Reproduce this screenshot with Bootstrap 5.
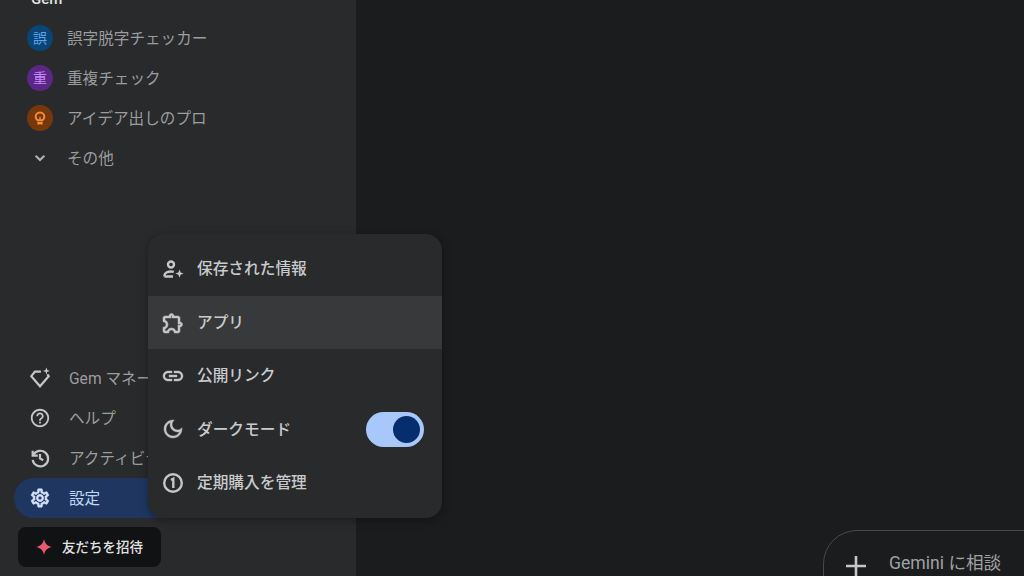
<!DOCTYPE html>
<html lang="ja">
  <head>
    <meta charset="UTF-8" />
    <meta name="viewport" content="width=device-width, initial-scale=1.0" />
    <title>Gemini</title>
    <link href="https://cdn.jsdelivr.net/npm/bootstrap@5.3.1/dist/css/bootstrap.min.css" rel="stylesheet" />
    <style>
      html, body { height: 100%; overflow: hidden; }
      body { background: #1b1c1d; font-family: Roboto, "Noto Sans CJK JP", sans-serif; }
      .app-shell { height: 576px; }
      .side-panel { width: 356px; height: 586px; margin-top: -10px; background: #282a2c; padding-bottom: 9px; flex-shrink: 0; }
      .gem-title { height: 28px; padding-left: 31px; font-size: 15px; line-height: 18px; font-weight: 500; color: #e3e3e3; }
      .side-row { height: 40px; color: #9b9d9f; font-size: 15.6px; white-space: nowrap; }
      .gem-label { padding-top: 3px; }
      .gem-row { padding-left: 27px; gap: 14px; }
      .gem-dot { width: 26px; height: 26px; border-radius: 50%; font-size: 14px; flex-shrink: 0; }
      .dot-blue { background: #0b4576; color: #5ea6ee; }
      .dot-purple { background: #5b2686; color: #c58af9; }
      .dot-orange { background: #76380a; color: #f28b3c; }
      .more-mark { width: 26px; flex-shrink: 0; }
      .tool-row { margin-left: 14px; padding-left: 15px; gap: 18px; width: 326px; }
      .tool-row svg { flex-shrink: 0; }
      .tool-on { background: #1f3760; color: #c2d7f8; border-radius: 20px; }
      .invite-btn { margin: 9px 0 0 18px; width: 143px; height: 40px; background: #111213; color: #e3e3e3; border-radius: 8px; font-size: 13.5px; font-weight: 500; padding-left: 17px; gap: 9px; }
      .main-pane { min-width: 0; }
      .ask-box { margin: auto -60px -54px 467px; height: 100px; border: 1px solid #47494b; border-radius: 34px; padding: 19px 0 0 20px; gap: 21px; color: #9fa1a3; font-size: 17.6px; }
      .settings-menu { position: absolute; left: 148px; top: 234px; width: 294px; height: 284px; background: #282a2c; border-radius: 16px; padding-top: 8.500px; box-shadow: 0 2px 8px rgba(0, 0, 0, .35); overflow: hidden; }
      .settings-row { height: 53.4px; padding-left: 13px; padding-right: 18px; gap: 12px; color: #c9cbcd; font-size: 15.7px; font-weight: 500; }
      .settings-row svg { flex-shrink: 0; }
      .row-hover { background: #38393b; }
      .theme-switch { width: 58px; height: 35px; border-radius: 18px; background: #a8c7fa; padding-right: 4px; }
      .theme-knob { width: 27px; height: 27px; border-radius: 50%; background: #062e6f; }
    </style>
  </head>
  <body>
    <div class="app-shell d-flex position-relative">
      <!-- Sidebar -->
      <aside class="side-panel d-flex flex-column">
        <div class="gem-title">Gem</div>
        <div class="side-row gem-row d-flex align-items-center">
          <span class="gem-dot dot-blue d-flex align-items-center justify-content-center">誤</span>
          <span class="gem-label">誤字脱字チェッカー</span>
        </div>
        <div class="side-row gem-row d-flex align-items-center">
          <span class="gem-dot dot-purple d-flex align-items-center justify-content-center">重</span>
          <span class="gem-label">重複チェック</span>
        </div>
        <div class="side-row gem-row d-flex align-items-center">
          <span class="gem-dot dot-orange d-flex align-items-center justify-content-center">
            <svg width="16" height="16" viewBox="0 0 24 24" fill="none" stroke="#f28b3c" stroke-width="3"><path d="M8.500 15.500c-1.900-1.200-3-3.100-3-5.200a6.500 6.500 0 0 1 13 0c0 2.100-1.100 4-3 5.200z" /><path d="M12 10v5" stroke-width="2" /><path d="M8 19.800h8" stroke-width="4" /></svg>
          </span>
          <span class="gem-label">アイデア出しのプロ</span>
        </div>
        <div class="side-row gem-row d-flex align-items-center">
          <span class="more-mark d-flex justify-content-center">
            <svg width="16" height="16" viewBox="0 0 24 24" fill="none" stroke="#b0b2b4" stroke-width="3.200"><path d="M5.500 8.500 12 15l6.500-6.500" /></svg>
          </span>
          <span class="gem-label">その他</span>
        </div>

        <div class="mt-auto">
          <div class="side-row tool-row d-flex align-items-center">
            <svg width="22" height="22" viewBox="0 0 24 24" fill="none" stroke="#c4c7c5" stroke-width="2.400"><path d="M13 5H6.500L2.500 10 12 21l9.500-11-1.500-2" /><path d="M19 .5l1 2.800 2.800 1-2.800 1-1 2.800-1-2.800-2.800-1 2.800-1z" fill="#c4c7c5" stroke="none" /></svg>
            <span class="gem-label">Gem マネージャー</span>
          </div>
          <div class="side-row tool-row d-flex align-items-center">
            <svg width="22" height="22" viewBox="0 0 24 24" fill="#c4c7c5"><path d="M11 18h2v-2h-2v2zm1-16C6.480 2 2 6.480 2 12s4.480 10 10 10 10-4.480 10-10S17.520 2 12 2zm0 18c-4.410 0-8-3.590-8-8s3.590-8 8-8 8 3.590 8 8-3.590 8-8 8zm0-14c-2.210 0-4 1.790-4 4h2c0-1.100.9-2 2-2s2 .9 2 2c0 2-3 1.750-3 5h2c0-2.250 3-2.500 3-5 0-2.210-1.790-4-4-4z" /></svg>
            <span class="gem-label">ヘルプ</span>
          </div>
          <div class="side-row tool-row d-flex align-items-center">
            <svg width="22" height="22" viewBox="0 0 24 24" fill="none" stroke="#c4c7c5" stroke-width="2.400"><path d="M4 4v5.500h5.500" /><path d="M4.600 9.200A8.500 8.500 0 1 1 4 14" /><path d="M12 7.500V12.500l3.500 2" /></svg>
            <span class="gem-label">アクティビティ</span>
          </div>
          <div class="side-row tool-row tool-on d-flex align-items-center">
            <svg width="22" height="22" viewBox="0 0 24 24" fill="#d3e3fd" stroke="#d3e3fd" stroke-width=".6"><path d="M19.430 12.980c.04-.32.07-.64.07-.98 0-.34-.03-.66-.07-.98l2.110-1.650c.19-.15.24-.42.12-.64l-2-3.460c-.09-.16-.26-.25-.44-.25-.06 0-.12.01-.17.03l-2.490 1c-.52-.4-1.080-.73-1.690-.98l-.38-2.650C14.460 2.180 14.250 2 14 2h-4c-.25 0-.46.18-.49.42l-.38 2.650c-.61.25-1.170.59-1.690.98l-2.490-1c-.06-.02-.12-.03-.18-.03-.17 0-.34.09-.43.25l-2 3.460c-.13.22-.07.49.12.64l2.110 1.650c-.04.32-.07.65-.07.98 0 .33.03.66.07.98l-2.110 1.650c-.19.15-.24.42-.12.64l2 3.460c.09.16.26.25.44.25.06 0 .12-.01.17-.03l2.490-1c.52.4 1.080.73 1.690.98l.38 2.650c.03.24.24.42.49.42h4c.25 0 .46-.18.49-.42l.38-2.650c.61-.25 1.170-.59 1.690-.98l2.490 1c.06.02.12.03.18.03.17 0 .34-.09.43-.25l2-3.460c.12-.22.07-.49-.12-.64l-2.110-1.650zm-1.980-1.710c.04.31.05.52.05.73 0 .21-.02.43-.05.73l-.14 1.130.89.7 1.080.84-.7 1.210-1.270-.51-1.040-.42-.9.68c-.43.32-.84.56-1.250.73l-1.060.43-.16 1.130-.2 1.350h-1.400l-.19-1.350-.16-1.130-1.060-.43c-.43-.18-.83-.41-1.230-.71l-.91-.7-1.060.43-1.270.51-.7-1.210 1.080-.84.89-.7-.14-1.130c-.03-.31-.05-.54-.05-.74s.02-.43.05-.73l.14-1.130-.89-.7-1.080-.84.7-1.210 1.270.51 1.040.42.9-.68c.43-.32.84-.56 1.250-.73l1.060-.43.16-1.130.2-1.350h1.390l.19 1.350.16 1.130 1.060.43c.43.18.83.41 1.230.71l.91.7 1.060-.43 1.270-.51.7 1.210-1.070.85-.89.7.14 1.130zM12 8c-2.210 0-4 1.790-4 4s1.790 4 4 4 4-1.790 4-4-1.790-4-4-4zm0 6c-1.100 0-2-.9-2-2s.9-2 2-2 2 .9 2 2-.9 2-2 2z" /></svg>
            <span class="gem-label">設定</span>
          </div>
          <div class="invite-btn d-flex align-items-center">
            <svg width="18" height="18" viewBox="0 0 24 24"><path d="M12 1c1 6.500 4.500 10 11 11-6.500 1-10 4.500-11 11-1-6.500-4.500-10-11-11 6.500-1 10-4.500 11-11z" fill="#e8596f" /></svg>
            <span>友だちを招待</span>
          </div>
        </div>
      </aside>

      <!-- Main -->
      <main class="main-pane flex-grow-1 d-flex flex-column">
        <div class="ask-box d-flex align-items-start">
          <svg class="mt-1" width="24" height="24" viewBox="0 0 24 24" fill="none" stroke="#c4c7c5" stroke-width="2.600"><path d="M12 2v20M2 12h20" /></svg>
          <span>Gemini に相談</span>
        </div>
      </main>

      <!-- Settings menu -->
      <div class="settings-menu">
        <div class="settings-row d-flex align-items-center">
          <svg width="24" height="24" viewBox="0 0 24 24" fill="none" stroke="#c4c7c5" stroke-width="2.400"><circle cx="10" cy="7.500" r="3" /><path d="M3.500 19.500v-1.200c0-2.400 3-3.800 6.500-3.800 1 0 2 .1 2.800.4M3.500 19.500h8.500" /><path d="M18.500 12.500l1.100 3 3 1.100-3 1.100-1.100 3-1.100-3-3-1.100 3-1.100z" fill="#c4c7c5" stroke="none" /></svg>
          <span>保存された情報</span>
        </div>
        <div class="settings-row row-hover d-flex align-items-center">
          <svg width="24" height="24" viewBox="0 0 24 24" fill="#c4c7c5" stroke="#c4c7c5" stroke-width=".5"><path d="M10.500 4.500c.28 0 .5.22.5.5v2h6v6h2c.28 0 .5.22.5.5s-.22.5-.5.5h-2v6h-2.120c-.68-1.750-2.390-3-4.380-3s-3.700 1.250-4.380 3H4v-2.120c1.750-.68 3-2.390 3-4.380 0-1.990-1.240-3.700-2.990-4.380L4 7h6V5c0-.28.22-.5.5-.5m0-2C9.120 2.500 8 3.620 8 5H4c-1.100 0-1.990.9-1.990 2v3.800h.29c1.490 0 2.700 1.210 2.700 2.700s-1.210 2.700-2.700 2.700H2V20c0 1.100.9 2 2 2h3.800v-.3c0-1.490 1.210-2.700 2.700-2.700s2.700 1.210 2.700 2.700v.3H17c1.100 0 2-.9 2-2v-4c1.380 0 2.500-1.120 2.500-2.500S20.380 11 19 11V7c0-1.100-.9-2-2-2h-4c0-1.380-1.120-2.500-2.500-2.500z" /></svg>
          <span>アプリ</span>
        </div>
        <div class="settings-row d-flex align-items-center">
          <svg width="24" height="24" viewBox="0 0 24 24" fill="#c4c7c5" stroke="#c4c7c5" stroke-width=".4"><path d="M3.900 12c0-1.710 1.390-3.100 3.100-3.100h4V7H7c-2.760 0-5 2.240-5 5s2.240 5 5 5h4v-1.900H7c-1.710 0-3.100-1.390-3.100-3.100zM8 13h8v-2H8v2zm9-6h-4v1.900h4c1.710 0 3.100 1.390 3.100 3.100s-1.390 3.100-3.100 3.100h-4V17h4c2.760 0 5-2.240 5-5s-2.240-5-5-5z" /></svg>
          <span>公開リンク</span>
        </div>
        <div class="settings-row d-flex align-items-center">
          <svg width="24" height="24" viewBox="0 0 24 24" fill="#c4c7c5" stroke="#c4c7c5" stroke-width=".4"><path d="M9.370 5.510c-.18.64-.27 1.310-.27 1.990 0 4.080 3.320 7.400 7.400 7.400.68 0 1.350-.09 1.990-.27C17.450 17.190 14.930 19 12 19c-3.860 0-7-3.140-7-7 0-2.930 1.810-5.450 4.370-6.490zM12 3c-4.970 0-9 4.030-9 9s4.030 9 9 9 9-4.030 9-9c0-.46-.04-.92-.1-1.360-.98 1.370-2.580 2.260-4.400 2.260-2.980 0-5.400-2.420-5.400-5.400 0-1.810.89-3.420 2.260-4.400-.44-.06-.9-.1-1.360-.1z" /></svg>
          <span>ダークモード</span>
          <span class="theme-switch ms-auto d-flex align-items-center justify-content-end"><span class="theme-knob"></span></span>
        </div>
        <div class="settings-row d-flex align-items-center">
          <svg width="24" height="24" viewBox="0 0 24 24" fill="none" stroke="#c4c7c5" stroke-width="2.400"><circle cx="12" cy="12" r="8.800" /><path d="M10 9l2.300-1.300V17" /></svg>
          <span>定期購入を管理</span>
        </div>
      </div>
    </div>
    <script src="https://cdn.jsdelivr.net/npm/bootstrap@5.3.1/dist/js/bootstrap.bundle.min.js"></script>
  </body>
</html>
